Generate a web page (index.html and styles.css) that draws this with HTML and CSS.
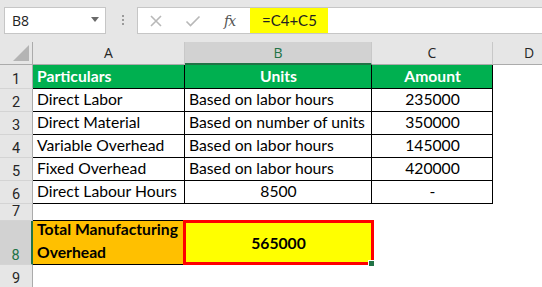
FILE: index.html
```html
<!DOCTYPE html>
<html>
<head>
<meta charset="utf-8">
<link rel="stylesheet" href="styles.css">
</head>
<body>
<div class="topbar">
  <div class="namebox">
    <span class="name">B8</span>
    <svg class="dd" width="8" height="5" viewBox="0 0 8 5"><path d="M0 0H8L4 5Z" fill="#6a6a6a"/></svg>
  </div>
  <div class="dots"><i></i><i></i><i></i></div>
  <div class="fbox">
    <div class="fbtns">
      <svg class="ic" width="14" height="14" viewBox="0 0 14 14"><path d="M2 2L12 12M12 2L2 12" stroke="#b8b8b8" stroke-width="1.6" fill="none"/></svg>
      <svg class="ic" width="16" height="14" viewBox="0 0 16 14"><path d="M1.5 7.5L5.5 11.5L14.5 2.5" stroke="#b8b8b8" stroke-width="1.6" fill="none"/></svg>
      <span class="fx">fx</span>
    </div>
    <div class="formula">=C4+C5</div>
  </div>
</div>
<div class="sheet">
  <div class="ch corner"><svg width="16" height="16" viewBox="0 0 16 16"><path d="M16 0V16H0Z" fill="#b4b4b4"/></svg></div>
  <div class="ch">A</div>
  <div class="ch sel">B</div>
  <div class="ch">C</div>
  <div class="ch">D</div>

  <div class="rh">1</div>
  <div class="c hd">Particulars</div>
  <div class="c hd ctr">Units</div>
  <div class="c hd ctr">Amount</div>
  <div class="e"></div>

  <div class="rh">2</div>
  <div class="c">Direct Labor</div>
  <div class="c">Based on labor hours</div>
  <div class="c ctr">235000</div>
  <div class="e"></div>

  <div class="rh">3</div>
  <div class="c">Direct Material</div>
  <div class="c">Based on number of units</div>
  <div class="c ctr">350000</div>
  <div class="e"></div>

  <div class="rh">4</div>
  <div class="c">Variable Overhead</div>
  <div class="c">Based on labor hours</div>
  <div class="c ctr">145000</div>
  <div class="e"></div>

  <div class="rh">5</div>
  <div class="c">Fixed Overhead</div>
  <div class="c">Based on labor hours</div>
  <div class="c ctr">420000</div>
  <div class="e"></div>

  <div class="rh">6</div>
  <div class="c">Direct Labour Hours</div>
  <div class="c ctr">8500</div>
  <div class="c ctr">-</div>
  <div class="e"></div>

  <div class="rh">7</div>
  <div class="e under"></div>
  <div class="e"></div>
  <div class="e"></div>
  <div class="e"></div>

  <div class="rh rsel">8</div>
  <div class="c total">Total Manufacturing Overhead</div>
  <div class="c result"><span>565000</span></div>
  <div class="e"></div>
  <div class="e"></div>

  <div class="rh">9</div>
  <div class="e"></div>
  <div class="e"></div>
  <div class="e"></div>
  <div class="e"></div>
</div>
</body>
</html>
```
FILE: styles.css
```css
html, body {
  margin: 0;
  padding: 0;
  width: 542px;
  height: 287px;
  overflow: hidden;
  background: #fff;
}
.topbar {
  height: 42px;
  background: #e6e6e6;
  display: flex;
  align-items: flex-start;
  padding-top: 7px;
  box-sizing: border-box;
  width: 542px;
}
.namebox {
  margin-left: 4px;
  width: 102px;
  height: 27px;
  box-sizing: border-box;
  background: #fff;
  border: 1px solid #c6c6c6;
  display: flex;
  align-items: center;
  justify-content: space-between;
  padding: 0 6px 0 7px;
  font-family: "Open Sans", sans-serif;
  font-size: 14px;
  color: #222;
}
.dd { margin-top: -2px; }
.dots {
  width: 31px;
  display: flex;
  flex-direction: column;
  align-items: center;
  gap: 2px;
  padding-top: 8px;
  padding-left: 2px;
  box-sizing: border-box;
}
.dots i {
  display: block;
  width: 2px;
  height: 2px;
  background: #9a9a9a;
}
.fbox {
  flex: 1;
  height: 27px;
  box-sizing: border-box;
  background: #fff;
  border: 1px solid #c6c6c6;
  border-right: none;
  display: flex;
}
.fbtns {
  width: 112px;
  display: flex;
  align-items: center;
  padding-left: 11px;
  gap: 22px;
  box-sizing: border-box;
}
.fx {
  font-family: "DejaVu Serif", serif;
  font-style: italic;
  font-size: 14px;
  color: #555;
  margin-left: 1px;
  letter-spacing: -1px;
}
.formula {
  width: 78px;
  background: #ffff00;
  font-family: "Lato", sans-serif;
  font-size: 15px;
  color: #222;
  padding-left: 12px;
  box-sizing: border-box;
  line-height: 25px;
}
.sheet {
  display: grid;
  grid-template-columns: 33px 152px 187px 121px 73px;
  grid-template-rows: 23px 24px 23px 23px 23px 23px 23px 17px 44px 23px;
  width: 566px;
  font-family: "Lato", sans-serif;
  font-size: 15.7px;
  color: #000;
}
.sheet > div {
  box-sizing: border-box;
}
.ch {
  background: #e6e6e6;
  border-right: 1px solid #c8c8c8;
  border-bottom: 1px solid #ababab;
  font-family: "Open Sans", sans-serif;
  font-size: 14px;
  color: #262626;
  display: flex;
  align-items: center;
  justify-content: center;
  line-height: 1;
}
.ch.corner {
  border-right-color: #ababab;
  justify-content: flex-end;
  align-items: flex-end;
  padding: 0 3px 3px 0;
}
.ch.sel {
  background: #d2d2d2;
  border-bottom: 2px solid #217346;
  color: #217346;
}
.rh {
  background: #e6e6e6;
  border-right: 1px solid #ababab;
  border-bottom: 1px solid #d4d4d4;
  font-family: "Roboto", sans-serif;
  font-size: 14.5px;
  color: #262626;
  display: flex;
  align-items: flex-end;
  justify-content: center;
  padding-bottom: 1px;
  line-height: 15px;
}
.rh.rsel {
  background: #d2d2d2;
  color: #217346;
  border-right: 2px solid #217346;
}
.c {
  border-right: 1px solid #000;
  border-bottom: 1px solid #000;
  display: flex;
  align-items: flex-end;
  padding: 0 3px 2px 4px;
  white-space: nowrap;
  line-height: 20px;
}
.c.ctr { justify-content: center; }
.c.hd {
  background: #00b050;
  color: #fff;
  font-weight: bold;
}
.e { background: #fff; }
.e.under { border-bottom: 1px solid #000; }
.c.total {
  background: #ffc000;
  font-weight: bold;
  white-space: normal;
  line-height: 23px;
  padding-bottom: 0;
}
.c.result {
  background: #ffff00;
  font-weight: bold;
  justify-content: center;
  align-items: center;
  position: relative;
  padding-bottom: 0;
}
.c.result::after {
  content: "";
  position: absolute;
  left: -2px;
  top: -1px;
  right: -3px;
  bottom: -1px;
  border: 3px solid #ff0000;
}
.c.result::before {
  content: "";
  position: absolute;
  right: -4px;
  bottom: -3px;
  width: 5px;
  height: 5px;
  background: #217346;
  border: 1px solid #fff;
  z-index: 2;
}
```
